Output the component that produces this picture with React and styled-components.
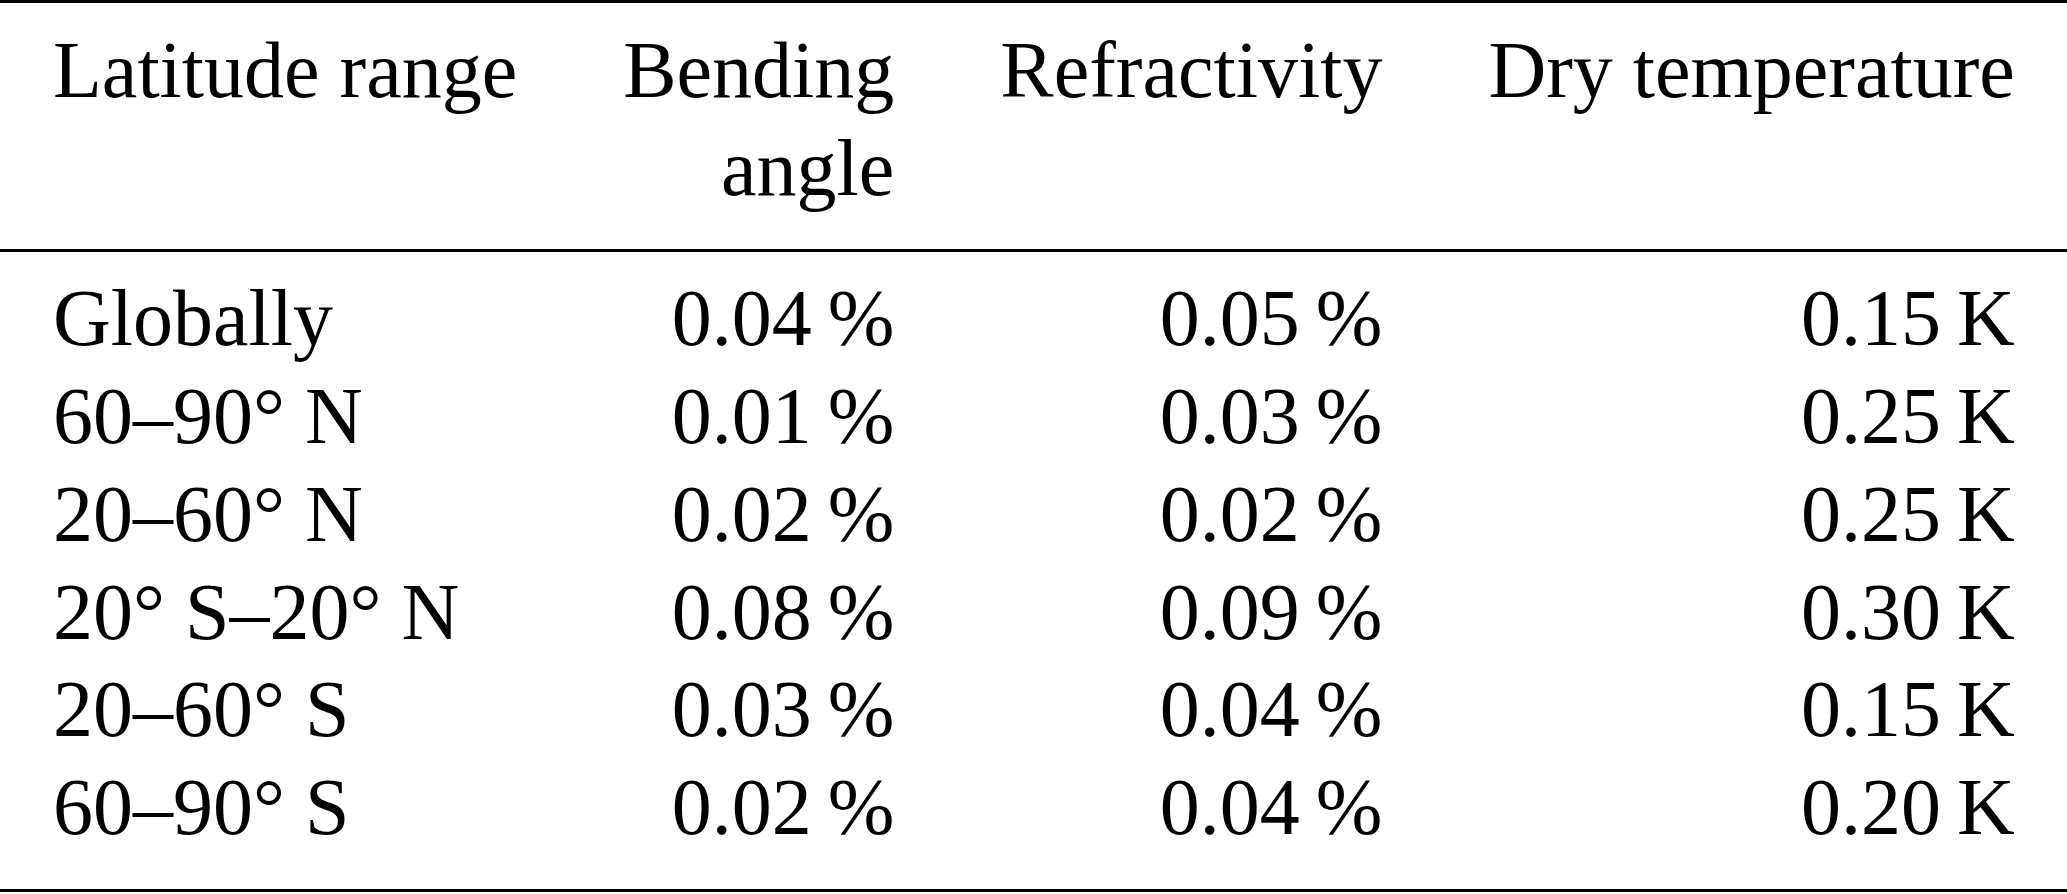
import React from 'react';
import styled, { createGlobalStyle } from 'styled-components';

const GlobalStyle = createGlobalStyle`
  html, body {
    margin: 0;
    padding: 0;
    background: #ffffff;
  }
  body {
    font-family: "Liberation Serif", "Times New Roman", serif;
    color: #000000;
  }
`;

const rows = [
  { range: 'Globally', bending: '0.04', refr: '0.05', temp: '0.15' },
  { range: '60–90° N', bending: '0.01', refr: '0.03', temp: '0.25' },
  { range: '20–60° N', bending: '0.02', refr: '0.02', temp: '0.25' },
  { range: '20° S–20° N', bending: '0.08', refr: '0.09', temp: '0.30' },
  { range: '20–60° S', bending: '0.03', refr: '0.04', temp: '0.15' },
  { range: '60–90° S', bending: '0.02', refr: '0.04', temp: '0.20' },
];

export default function App() {
  return (
    <>
      <GlobalStyle />
      <Page>
        <Table>
          <thead>
            <HeadRow>
              <HeadCell>Latitude range</HeadCell>
              <HeadCell $right>
                Bending
                <br />
                angle
              </HeadCell>
              <HeadCell $right>Refractivity</HeadCell>
              <HeadCell $right>Dry temperature</HeadCell>
            </HeadRow>
          </thead>
          <Body>
            {rows.map((row, i) => (
              <tr key={row.range}>
                <Cell $first={i === 0} $last={i === rows.length - 1}>
                  {row.range}
                </Cell>
                <Cell $right $first={i === 0} $last={i === rows.length - 1}>
                  {row.bending}
                  <Unit>%</Unit>
                </Cell>
                <Cell $right $first={i === 0} $last={i === rows.length - 1}>
                  {row.refr}
                  <Unit>%</Unit>
                </Cell>
                <Cell $right $first={i === 0} $last={i === rows.length - 1}>
                  {row.temp}
                  <Unit>K</Unit>
                </Cell>
              </tr>
            ))}
          </Body>
        </Table>
      </Page>
    </>
  );
}

const Page = styled.div`
  width: 2067px;
  background: #ffffff;
`;

const Table = styled.table`
  width: 100%;
  border-collapse: collapse;
  border-top: 3px solid #000;
  font-family: "Liberation Serif", "Times New Roman", serif;
  font-size: 80px;
  line-height: 97.7px;
  color: #000;
`;

const HeadRow = styled.tr`
  border-bottom: 3px solid #000;
`;

const HeadCell = styled.th`
  font-weight: normal;
  text-align: ${props => (props.$right ? 'right' : 'left')};
  vertical-align: top;
  white-space: nowrap;
  padding: 19px 53px 32px 53px;
`;

const Body = styled.tbody`
  border-bottom: 3px solid #000;
`;

const Cell = styled.td`
  text-align: ${props => (props.$right ? 'right' : 'left')};
  white-space: nowrap;
  padding: ${props => (props.$first ? '18px' : '0')} 53px ${props => (props.$last ? '32px' : '0')} 53px;
`;

const Unit = styled.span`
  margin-left: 0.2em;
`;
